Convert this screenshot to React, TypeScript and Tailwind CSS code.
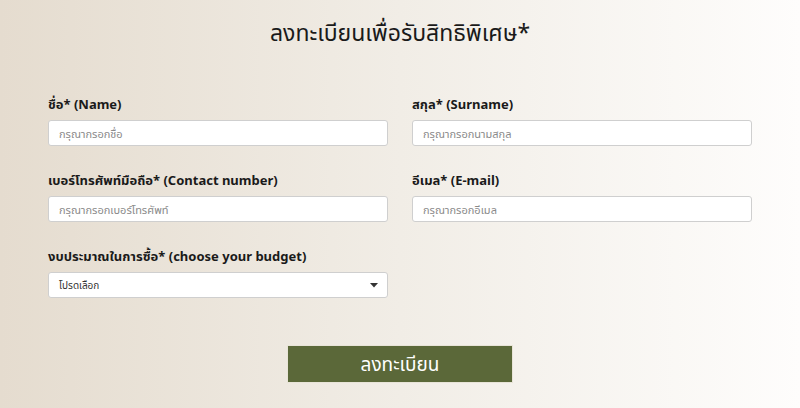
import React from "react";

const font = { fontFamily: '"Noto Sans", "Noto Sans Thai", Tahoma, sans-serif' };

function Field({ label, placeholder }: { label: string; placeholder: string }) {
  return (
    <div className="flex flex-col">
      <label className="text-[13px] font-bold text-[#1a1a1a] leading-[18px] mb-[7px]">{label}</label>
      <input
        className="h-[26px] w-full rounded-[3px] border border-[#cfcfcf] bg-white px-[10px] text-[11px] text-[#333] placeholder:text-[#8a8a8a] outline-none"
        placeholder={placeholder}
      />
    </div>
  );
}

export default function App() {
  return (
    <div
      className="w-[800px] h-[408px] overflow-hidden bg-gradient-to-r from-[#e5dccf] via-[#f1ede6] to-[#fefdfc]"
      style={font}
    >
      <h1 className="pt-[14px] text-center text-[23px] leading-[36px] text-[#1a1a1a] font-normal">
        ลงทะเบียนเพื่อรับสิทธิพิเศษ*
      </h1>
      <div className="mx-[48px] mt-[45px] grid grid-cols-2 gap-x-[24px] gap-y-[25px]">
        <Field label="ชื่อ* (Name)" placeholder="กรุณากรอกชื่อ" />
        <Field label="สกุล* (Surname)" placeholder="กรุณากรอกนามสกุล" />
        <Field label="เบอร์โทรศัพท์มือถือ* (Contact number)" placeholder="กรุณากรอกเบอร์โทรศัพท์" />
        <Field label="อีเมล* (E-mail)" placeholder="กรุณากรอกอีเมล" />
        <div className="flex flex-col">
          <label className="text-[13px] font-bold text-[#1a1a1a] leading-[18px] mb-[7px]">
            งบประมาณในการซื้อ* (choose your budget)
          </label>
          <div className="relative h-[26px] w-full rounded-[3px] border border-[#cfcfcf] bg-white flex items-center px-[10px]">
            <span className="text-[10px] text-[#333]">โปรดเลือก</span>
            <svg className="absolute right-[9px] top-[10px]" width="8" height="5" viewBox="0 0 8 5">
              <path d="M0 0 L8 0 L4 4.5 Z" fill="#333" />
            </svg>
          </div>
        </div>
      </div>
      <div className="mt-[47px] flex justify-center">
        <button className="h-[38px] w-[226px] bg-[#5b6839] text-white text-[19px] border border-[#e8e4d8]">
          ลงทะเบียน
        </button>
      </div>
    </div>
  );
}
